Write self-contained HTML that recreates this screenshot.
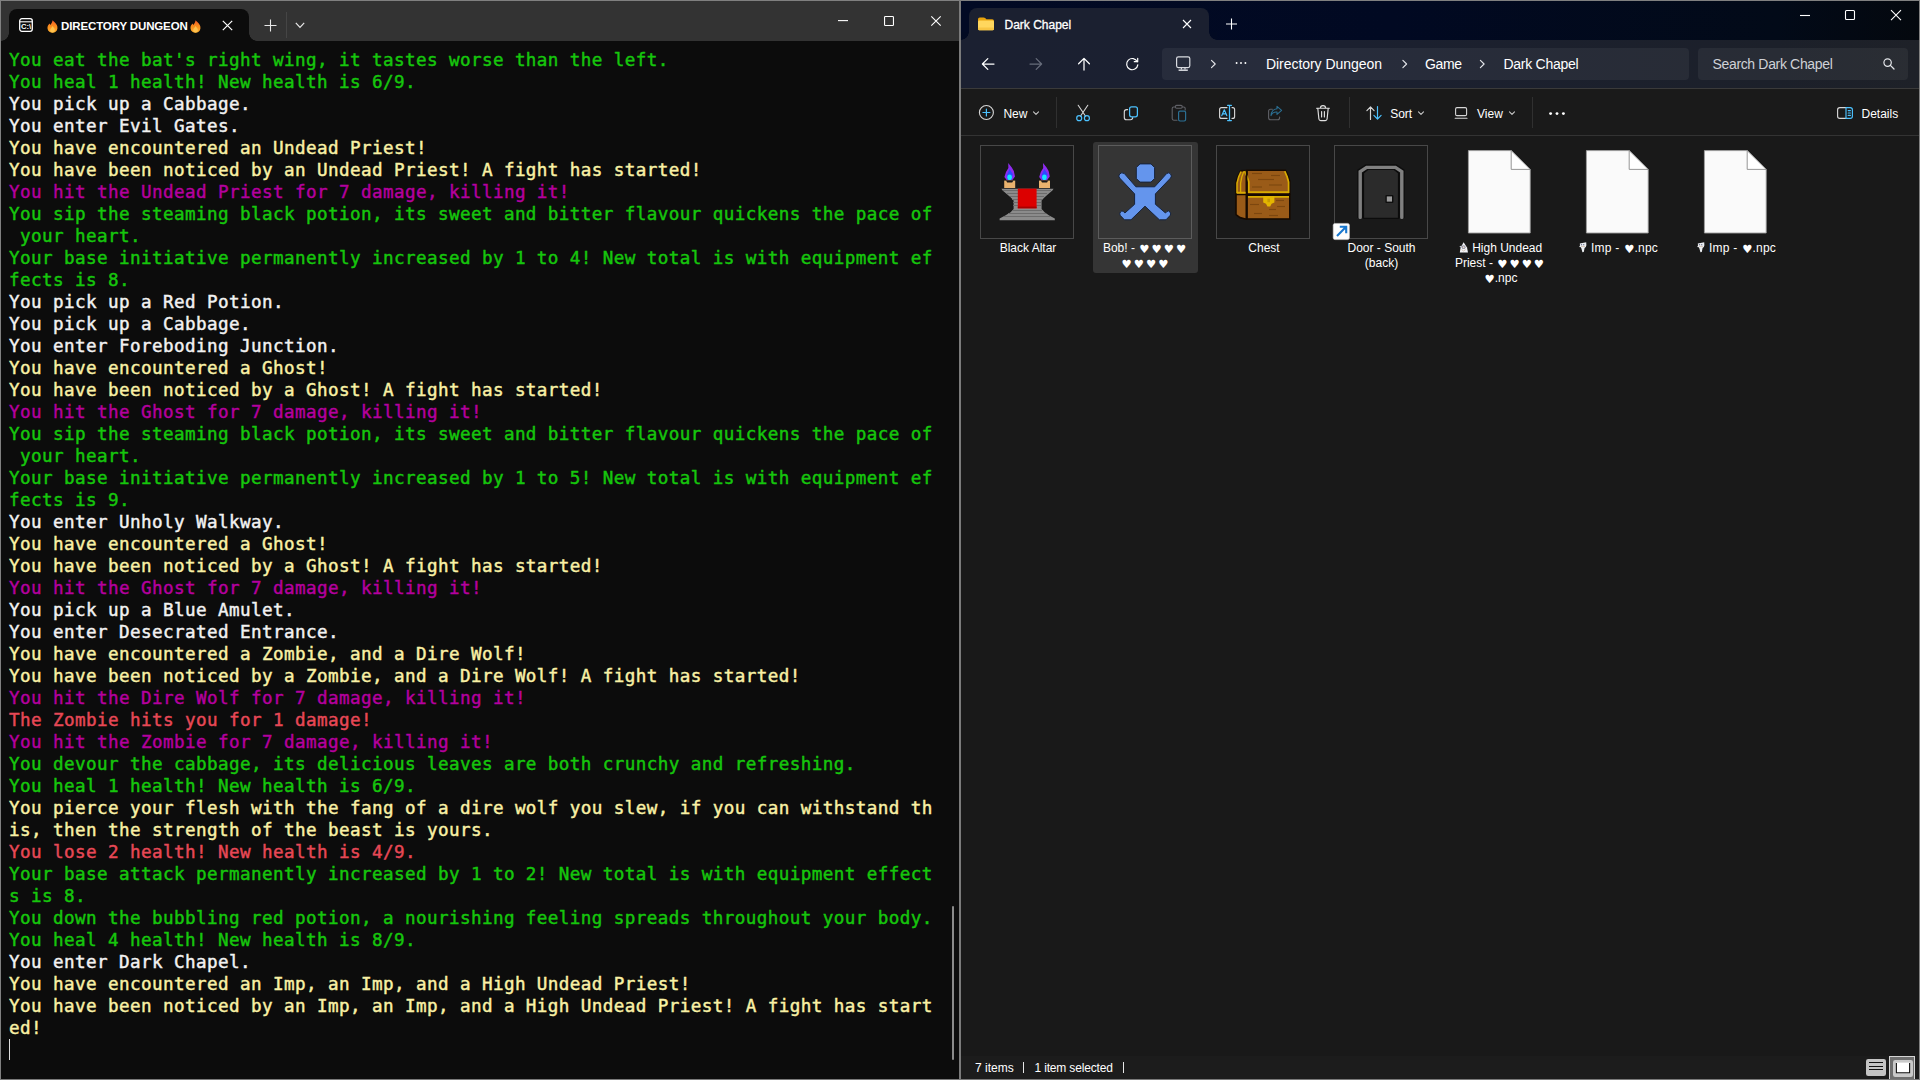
<!DOCTYPE html>
<html lang="en">
<head>
<meta charset="utf-8">
<title>Directory Dungeon</title>
<style>
*{box-sizing:border-box;margin:0;padding:0}
html,body{width:1920px;height:1080px;overflow:hidden;background:#0c0c0c}
body{position:relative;font-family:"Liberation Sans","DejaVu Sans",sans-serif;color:#fff}
.abs{position:absolute}
svg{position:absolute;overflow:visible}
/* ---------- terminal ---------- */
#term{position:absolute;left:0;top:0;width:959px;height:1080px;background:#0c0c0c}
#tbar{position:absolute;left:0;top:0;width:959px;height:41px;background:#333333}
#ttab{position:absolute;left:9px;top:9px;width:240px;height:32px;background:#0c0c0c;border-radius:8px 8px 0 0}
#ttab:before,#ttab:after{content:"";position:absolute;bottom:0;width:8px;height:8px;background:radial-gradient(circle at 0 0,#333333 7.5px,#0c0c0c 8px)}
#ttab:before{left:-8px}
#ttab:after{right:-8px;background:radial-gradient(circle at 100% 0,#333333 7.5px,#0c0c0c 8px)}
#ttitle{position:absolute;left:52px;top:9px;font:bold 11.5px/16px "Liberation Sans",sans-serif;letter-spacing:-0.13px;color:#fff;white-space:nowrap}
#tlines{position:absolute;left:9px;top:49px;font:normal 17.6px/22px "DejaVu Sans Mono","Liberation Mono",monospace;letter-spacing:0.405px;-webkit-text-stroke:0.45px currentColor}
#tlines div{height:22px;white-space:pre}
.g{color:#16c60c}.w{color:#f2f2f2}.y{color:#f9f1a5}.m{color:#b4009e}.r{color:#e74856}
/* ---------- explorer ---------- */
#exp{position:absolute;left:961px;top:0;width:959px;height:1080px;background:#191919}
#etitle{position:absolute;left:0;top:0;width:959px;height:40px;background:linear-gradient(90deg,#020a24 0%,#010922 45%,#020a18 85%,#04080e 100%)}
#etab{position:absolute;left:8px;top:8px;width:240px;height:32px;background:#1b2030;border-radius:8px 8px 0 0}
#etab:before,#etab:after{content:"";position:absolute;bottom:0;width:8px;height:8px;background:radial-gradient(circle at 0 0,#020a22 7.5px,#1b2030 8px)}
#etab:before{left:-8px}
#etab:after{right:-8px;background:radial-gradient(circle at 100% 0,#020a22 7.5px,#1b2030 8px)}
#enav{position:absolute;left:0;top:40px;width:959px;height:48px;background:linear-gradient(90deg,#1b2031 0%,#1b2030 40%,#1c202a 85%,#1e2128 100%)}
#ecmd{position:absolute;left:0;top:88px;width:959px;height:48px;background:#1a1a1a;box-shadow:inset 0 1px 0 #3a3a3a,inset 0 -1px 0 #333}
.box{position:absolute;top:9px;height:32px;background:rgba(255,255,255,0.055);border-radius:4px}
.t12{position:absolute;font-size:12px;line-height:15px;white-space:nowrap;color:#fff}
.t14{position:absolute;font-size:14px;line-height:20px;white-space:nowrap;color:#fff}
.lbl{position:absolute;width:118px;text-align:center;font-size:12px;line-height:15px;color:#fff;white-space:nowrap}
.h{font-family:"DejaVu Sans",sans-serif;font-size:11.4px;letter-spacing:2px;line-height:1px;position:relative;top:0.8px;margin-left:1px}
.h1{letter-spacing:0}
svg.ico{position:relative;vertical-align:-1px}
.frame{position:absolute;width:94px;height:94px;border:1px solid #484848}
.vsep{position:absolute;top:9px;width:1px;height:31px;background:#303030}
</style>
</head>
<body>
<!-- ================= TERMINAL ================= -->
<div id="term">
 <div id="tbar">
  <div id="ttab">
   <svg style="left:10px;top:9px" width="14" height="14" viewBox="0 0 14 14"><rect x="0.7" y="0.7" width="12.6" height="12.6" rx="2.2" fill="none" stroke="#fff" stroke-width="1.3"/><line x1="0.7" y1="3.8" x2="13.3" y2="3.8" stroke="#fff" stroke-width="1.1"/><text x="2" y="11" font-family="Liberation Sans,sans-serif" font-weight="bold" font-size="6.6" fill="#fff" textLength="10.2" lengthAdjust="spacingAndGlyphs">C:\</text></svg><svg style="left:37.6px;top:10.6px" width="11" height="13" viewBox="0 0 11 13"><defs><linearGradient id="fg1" x1="0" y1="0" x2="0" y2="1"><stop offset="0" stop-color="#f4582a"/><stop offset="0.45" stop-color="#f98a1d"/><stop offset="1" stop-color="#ffb02e"/></linearGradient></defs><path d="M5.6 0.2C6.6 1.6 8.6 2.8 9.8 5 11 7.4 10.6 10.2 8.6 11.8 6.9 13.1 4.2 13.1 2.4 11.8 0.4 10.3 0 7.6 1 5.6 1.4 4.8 2 4.2 2.6 3.4 2.9 4 3.1 4.5 3.3 5.1 4.3 3.8 5.2 2.2 5.6 0.2Z" fill="url(#fg1)"/><path d="M5.6 6C6.2 7.2 7.8 8.2 7.9 10 7.9 11.5 6.9 12.5 5.5 12.5 4.1 12.5 3.1 11.5 3.2 10 3.3 8.4 4.9 7.6 5.6 6Z" fill="#ffc24d"/></svg><svg style="left:180.6px;top:10.6px" width="11" height="13" viewBox="0 0 11 13"><defs><linearGradient id="fg2" x1="0" y1="0" x2="0" y2="1"><stop offset="0" stop-color="#f4582a"/><stop offset="0.45" stop-color="#f98a1d"/><stop offset="1" stop-color="#ffb02e"/></linearGradient></defs><path d="M5.6 0.2C6.6 1.6 8.6 2.8 9.8 5 11 7.4 10.6 10.2 8.6 11.8 6.9 13.1 4.2 13.1 2.4 11.8 0.4 10.3 0 7.6 1 5.6 1.4 4.8 2 4.2 2.6 3.4 2.9 4 3.1 4.5 3.3 5.1 4.3 3.8 5.2 2.2 5.6 0.2Z" fill="url(#fg2)"/><path d="M5.6 6C6.2 7.2 7.8 8.2 7.9 10 7.9 11.5 6.9 12.5 5.5 12.5 4.1 12.5 3.1 11.5 3.2 10 3.3 8.4 4.9 7.6 5.6 6Z" fill="#ffc24d"/></svg><svg style="left:213px;top:11px" width="11" height="11" viewBox="0 0 11 11"><path d="M0.8 0.8L10.2 10.2M10.2 0.8L0.8 10.2" stroke="#fff" stroke-width="1.2" fill="none"/></svg>
   <div id="ttitle">DIRECTORY DUNGEON</div>
  </div>
  <svg style="left:264px;top:19px" width="13" height="13" viewBox="0 0 13 13"><path d="M6.5 0.5V12.5M0.5 6.5H12.5" stroke="#e8e8e8" stroke-width="1.1" fill="none"/></svg>
<div class="abs" style="left:286px;top:12px;width:1px;height:26px;background:#454545"></div>
<svg style="left:295px;top:22px" width="10" height="7" viewBox="0 0 10 7"><path d="M0.8 0.9L5 5.3 9.2 0.9" stroke="#e8e8e8" stroke-width="1.2" fill="none"/></svg>
<svg style="left:838px;top:20px" width="10" height="2" viewBox="0 0 10 2"><path d="M0 0.6H10" stroke="#fff" stroke-width="1.1"/></svg>
<svg style="left:884px;top:16px" width="10" height="10" viewBox="0 0 10 10"><rect x="0.55" y="0.55" width="8.9" height="8.9" rx="0.8" fill="none" stroke="#fff" stroke-width="1.1"/></svg>
<svg style="left:931px;top:16px" width="10" height="10" viewBox="0 0 10 10"><path d="M0.3 0.3L9.7 9.7M9.7 0.3L0.3 9.7" stroke="#fff" stroke-width="1.1" fill="none"/></svg>
 </div>
 <div id="tlines">
<div class="g">You eat the bat's right wing, it tastes worse than the left.</div>
<div class="g">You heal 1 health! New health is 6/9.</div>
<div class="w">You pick up a Cabbage.</div>
<div class="w">You enter Evil Gates.</div>
<div class="y">You have encountered an Undead Priest!</div>
<div class="y">You have been noticed by an Undead Priest! A fight has started!</div>
<div class="m">You hit the Undead Priest for 7 damage, killing it!</div>
<div class="g">You sip the steaming black potion, its sweet and bitter flavour quickens the pace of</div>
<div class="g"> your heart.</div>
<div class="g">Your base initiative permanently increased by 1 to 4! New total is with equipment ef</div>
<div class="g">fects is 8.</div>
<div class="w">You pick up a Red Potion.</div>
<div class="w">You pick up a Cabbage.</div>
<div class="w">You enter Foreboding Junction.</div>
<div class="y">You have encountered a Ghost!</div>
<div class="y">You have been noticed by a Ghost! A fight has started!</div>
<div class="m">You hit the Ghost for 7 damage, killing it!</div>
<div class="g">You sip the steaming black potion, its sweet and bitter flavour quickens the pace of</div>
<div class="g"> your heart.</div>
<div class="g">Your base initiative permanently increased by 1 to 5! New total is with equipment ef</div>
<div class="g">fects is 9.</div>
<div class="w">You enter Unholy Walkway.</div>
<div class="y">You have encountered a Ghost!</div>
<div class="y">You have been noticed by a Ghost! A fight has started!</div>
<div class="m">You hit the Ghost for 7 damage, killing it!</div>
<div class="w">You pick up a Blue Amulet.</div>
<div class="w">You enter Desecrated Entrance.</div>
<div class="y">You have encountered a Zombie, and a Dire Wolf!</div>
<div class="y">You have been noticed by a Zombie, and a Dire Wolf! A fight has started!</div>
<div class="m">You hit the Dire Wolf for 7 damage, killing it!</div>
<div class="r">The Zombie hits you for 1 damage!</div>
<div class="m">You hit the Zombie for 7 damage, killing it!</div>
<div class="g">You devour the cabbage, its delicious leaves are both crunchy and refreshing.</div>
<div class="g">You heal 1 health! New health is 6/9.</div>
<div class="y">You pierce your flesh with the fang of a dire wolf you slew, if you can withstand th</div>
<div class="y">is, then the strength of the beast is yours.</div>
<div class="r">You lose 2 health! New health is 4/9.</div>
<div class="g">Your base attack permanently increased by 1 to 2! New total is with equipment effect</div>
<div class="g">s is 8.</div>
<div class="g">You down the bubbling red potion, a nourishing feeling spreads throughout your body.</div>
<div class="g">You heal 4 health! New health is 8/9.</div>
<div class="w">You enter Dark Chapel.</div>
<div class="y">You have encountered an Imp, an Imp, and a High Undead Priest!</div>
<div class="y">You have been noticed by an Imp, an Imp, and a High Undead Priest! A fight has start</div>
<div class="y">ed!</div>
 </div>
 <div class="abs" style="left:9px;top:1039px;width:1px;height:21px;background:#ddd"></div>
 <div class="abs" style="left:952px;top:906px;width:2px;height:154px;background:#8a8a8a;border-radius:1px"></div>
</div>
<!-- ================= EXPLORER ================= -->
<div id="exp">
 <div id="etitle">
  <div id="etab">
   
   <div class="t12" style="left:35.5px;top:10.2px;-webkit-text-stroke:0.3px #fff">Dark Chapel</div>
  </div>
  <svg style="left:0;top:0" width="959" height="40" viewBox="961 0 959 40">
<path d="M978 19.2Q978 17.4 979.8 17.4H983.6Q984.5 17.4 985.1 18L986.4 19.3H992.2Q994 19.3 994 21.1V22H978Z" fill="#e8a30c"/>
<rect x="978" y="20.6" width="16" height="9.6" rx="1.4" fill="#ffd75e"/>
<rect x="978" y="27.5" width="16" height="2.7" rx="1.2" fill="#f7c544"/>
<path d="M1183 20L1191 28M1191 20L1183 28" stroke="#fff" stroke-width="1.1" fill="none"/>
<path d="M1231.5 18.5V29.5M1226 24H1237" stroke="#fff" stroke-width="1.1" fill="none"/>
<path d="M1800 15.5H1810" stroke="#fff" stroke-width="1.1"/>
<rect x="1845.5" y="10.5" width="9" height="9" rx="1" fill="none" stroke="#fff" stroke-width="1.1"/>
<path d="M1891 10.2L1901 20.2M1901 10.2L1891 20.2" stroke="#fff" stroke-width="1.1" fill="none"/>
</svg>
 </div>
 <div id="enav">
  <div class="box" style="left:201px;top:8px;width:527px"></div>
<div class="box" style="left:737px;top:8px;width:210px"></div>
<svg style="left:0;top:0" width="959" height="48" viewBox="961 40 959 48" fill="none" stroke-linecap="round" stroke-linejoin="round">
<path d="M994 64H982.5M987.8 58.6L982.4 64 987.8 69.4" stroke="#fff" stroke-width="1.25"/>
<path d="M1030 64H1041.5M1036.2 58.6L1041.6 64 1036.2 69.4" stroke="#676c7a" stroke-width="1.25"/>
<path d="M1084 70V58.5M1078.6 63.8L1084 58.4 1089.4 63.8" stroke="#fff" stroke-width="1.25"/>
<path d="M1137.3 61.7A5.6 5.6 0 1 0 1137.8 64.9" stroke="#fff" stroke-width="1.2"/><path d="M1137.7 58.3V61.7H1134.3" stroke="#fff" stroke-width="1.2"/>
<rect x="1176.6" y="56.8" width="13.2" height="10.8" rx="1.8" stroke="#d9dbe0" stroke-width="1.2"/><path d="M1178.6 70.2H1187.8" stroke="#d9dbe0" stroke-width="1.5" stroke-linecap="butt"/><path d="M1181.4 68V69.6M1185 68V69.6" stroke="#d9dbe0" stroke-width="1.2" stroke-linecap="butt"/>
<path d="M1211.5 60.4L1215.2 64 1211.5 67.6" stroke="#e4e6ea" stroke-width="1.15"/>
<path d="M1402.9 60.4L1406.6 64 1402.9 67.6" stroke="#e4e6ea" stroke-width="1.15"/>
<path d="M1480.4 60.4L1484.1 64 1480.4 67.6" stroke="#e4e6ea" stroke-width="1.15"/>
<circle cx="1236.6" cy="63" r="0.95" fill="#fff" stroke="none"/>
<circle cx="1241" cy="63" r="0.95" fill="#fff" stroke="none"/>
<circle cx="1245.4" cy="63" r="0.95" fill="#fff" stroke="none"/>
<circle cx="1887.6" cy="62.6" r="3.7" stroke="#e4e6ea" stroke-width="1.2"/><path d="M1890.4 65.4L1894 69" stroke="#e4e6ea" stroke-width="1.3"/>
</svg>
<div class="t14" style="left:305px;top:14px;letter-spacing:-0.05px">Directory Dungeon</div>
<div class="t14" style="left:464px;top:14px;letter-spacing:-0.4px">Game</div>
<div class="t14" style="left:542.5px;top:14px;letter-spacing:-0.28px">Dark Chapel</div>
<div class="t14" style="left:751.5px;top:14px;color:#cfd1d6;letter-spacing:-0.34px">Search Dark Chapel</div>
 </div>
 <div id="ecmd">
  <div class="vsep" style="left:95px"></div>
<div class="vsep" style="left:388px"></div>
<div class="vsep" style="left:571px"></div>
<svg style="left:0;top:0" width="959" height="48" viewBox="961 88 959 48" fill="none" stroke-linecap="round" stroke-linejoin="round">
<circle cx="986.4" cy="112.5" r="7" stroke="#d6d6d6" stroke-width="1.1"/><path d="M986.4 109V116M982.9 112.5H989.9" stroke="#4cc2ff" stroke-width="1.2"/>
<path d="M1033.5 111.8L1036 114.3 1038.5 111.8" stroke="#c8c8c8" stroke-width="1.1"/>
<path d="M1418.5 111.8L1421 114.3 1423.5 111.8" stroke="#c8c8c8" stroke-width="1.1"/>
<path d="M1509.5 111.8L1512 114.3 1514.5 111.8" stroke="#c8c8c8" stroke-width="1.1"/>
<path d="M1078.2 105.3L1085.6 116.2M1087.8 105.3L1080.4 116.2" stroke="#d6d6d6" stroke-width="1.1"/>
<circle cx="1079.2" cy="118.2" r="2.5" stroke="#4cc2ff" stroke-width="1.2"/><circle cx="1086.9" cy="118.2" r="2.5" stroke="#4cc2ff" stroke-width="1.2"/>
<path d="M1127.6 109.6H1126.6Q1124.3 109.6 1124.3 111.9V117.4Q1124.3 119.7 1126.6 119.7H1130.4Q1132.7 119.7 1132.7 117.6" stroke="#d6d6d6" stroke-width="1.15"/>
<rect x="1129.6" y="106.8" width="7.8" height="10" rx="2" stroke="#4cc2ff" stroke-width="1.25"/>
<path d="M1175 107H1173.8Q1172.2 107 1172.2 108.6V118.6Q1172.2 120.2 1173.8 120.2H1177M1182.6 107H1183.6Q1185.2 107 1185.2 108.6V110" stroke="#5f6066" stroke-width="1.1"/><rect x="1175.4" y="105.4" width="6.8" height="2.8" rx="1.2" stroke="#5f6066" stroke-width="1.1"/>
<rect x="1178.6" y="111.2" width="7" height="9.8" rx="1.4" stroke="#2b6f93" stroke-width="1.2"/>
<path d="M1227 107.6H1221.6Q1219.6 107.6 1219.6 109.6V116.4Q1219.6 118.4 1221.6 118.4H1227M1232 107.6H1232.8Q1234.6 107.6 1234.6 109.6V116.4Q1234.6 118.4 1232.8 118.4H1232" stroke="#d6d6d6" stroke-width="1.15"/>
<path d="M1229.5 105.4V120.6M1227.6 105.4H1231.4M1227.6 120.6H1231.4" stroke="#4cc2ff" stroke-width="1.25"/>
<path d="M1221.8 115.6L1224.3 109.8 1226.8 115.6M1222.7 113.8H1225.9" stroke="#4cc2ff" stroke-width="1.15"/>
<path d="M1272.4 109.2H1270.6Q1268.6 109.2 1268.6 111.2V117.8Q1268.6 119.8 1270.6 119.8H1277.6Q1279.6 119.8 1279.6 117.8V117" stroke="#5f6066" stroke-width="1.1"/>
<path d="M1277 106.4L1281.6 110.4 1277 114.4V112Q1272.8 111.6 1271 115.6 1271.4 109.4 1277 108.8Z" stroke="#2b6f93" stroke-width="1.1"/>
<path d="M1316.6 108.2H1329.4M1320.4 108Q1320.4 105.6 1323 105.6 1325.6 105.6 1325.6 108M1317.8 108.4L1318.9 119Q1319.1 120.6 1320.7 120.6H1325.3Q1326.9 120.6 1327.1 119L1328.2 108.4M1321.6 111.6V117M1324.4 111.6V117" stroke="#e0e0e0" stroke-width="1.15"/>
<path d="M1370.5 119.4V107M1366.9 110.6L1370.5 106.9 1374.1 110.6" stroke="#d6d6d6" stroke-width="1.15"/>
<path d="M1377.5 106.6V119M1373.9 115.4L1377.5 119.1 1381.1 115.4" stroke="#4cc2ff" stroke-width="1.2"/>
<rect x="1455.6" y="107.6" width="11" height="8" rx="1.4" stroke="#d6d6d6" stroke-width="1.1"/><path d="M1455.2 118.2H1467" stroke="#d6d6d6" stroke-width="1.1"/>
<circle cx="1550.6" cy="113.6" r="1.45" fill="#fff" stroke="none"/>
<circle cx="1557" cy="113.6" r="1.45" fill="#fff" stroke="none"/>
<circle cx="1563.4" cy="113.6" r="1.45" fill="#fff" stroke="none"/>
<path d="M1846 107.6H1839.8Q1837.6 107.6 1837.6 109.8V116.2Q1837.6 118.4 1839.8 118.4H1846" stroke="#d6d6d6" stroke-width="1.15"/>
<path d="M1846 107.6H1850.2Q1852.4 107.6 1852.4 109.8V116.2Q1852.4 118.4 1850.2 118.4H1846ZM1848.2 110.6H1850.4M1848.2 113H1850.4M1848.2 115.4H1850.4" stroke="#4cc2ff" stroke-width="1.15"/>
</svg>
<div class="t12" style="left:42.4px;top:19.3px;">New</div>
<div class="t12" style="left:429.2px;top:19.3px;">Sort</div>
<div class="t12" style="left:516px;top:19.3px;">View</div>
<div class="t12" style="left:900.5px;top:19.3px;">Details</div>
 </div>
 <div id="eitems">
  <div class="abs" style="left:132px;top:142px;width:105px;height:131px;background:#353535;border-radius:3px"></div>
<div class="frame" style="left:19px;top:145px"></div>
<div class="frame" style="left:137px;top:145px;border-color:#5c5c5c"></div>
<div class="frame" style="left:255px;top:145px"></div>
<div class="frame" style="left:373px;top:145px"></div>
<svg style="left:0;top:136px" width="959" height="160" viewBox="961 136 959 160">
<path d="M1008.2 163L1011.8 167.5 1013.8 171 1015 176.5 1012.2 180.2H1006.8L1004.4 177 1006 172 1008.4 168Z" fill="#8f2bf0"/>
<path d="M1009.6 169L1012.8 174 1011.8 179.6H1007L1006.8 175Z" fill="#2f49ff"/>
<ellipse cx="1009.6" cy="177.2" rx="2.3" ry="2.8" fill="#16e4ff"/>
<path d="M1004.2 180.6H1015.2V188H1004.2Z" fill="#e9b26e"/>
<path d="M1006 180.4H1013.4L1012.2 182.4H1007.2Z" fill="#191919"/>
<path d="M1043 163L1046.6 167.5 1048.6 171 1049.8 176.5 1047 180.2H1041.6L1039.2 177 1040.8 172 1043.2 168Z" fill="#8f2bf0"/>
<path d="M1044.4 169L1047.6 174 1046.6 179.6H1041.8L1041.6 175Z" fill="#2f49ff"/>
<ellipse cx="1044.4" cy="177.2" rx="2.3" ry="2.8" fill="#16e4ff"/>
<path d="M1039 180.6H1050V188H1039Z" fill="#e9b26e"/>
<path d="M1040.8 180.4H1048.2L1047 182.4H1042Z" fill="#191919"/>
<path d="M1001.4 188.7H1053.6L1052.4 190.6 1048 194.2 1044.4 197.4 1041.6 200.4V209L1044.6 212.2 1049.2 215.6 1054.8 218.4V220.2H999.6V218.4L1005.2 215.6 1010.6 212.2 1013.6 209V200.4L1010.8 197.4 1007 194.2 1002.6 190.6Z" fill="#8b8b8b"/>
<path d="M1003 190.5H1051" stroke="#6c6c6c" stroke-width="1"/>
<path d="M1007 193.5H1047" stroke="#6c6c6c" stroke-width="1"/>
<path d="M1010 196.5H1044" stroke="#6c6c6c" stroke-width="1"/>
<path d="M1012 199.5H1042" stroke="#6c6c6c" stroke-width="1"/>
<path d="M1013 202.5H1041" stroke="#6c6c6c" stroke-width="1"/>
<path d="M1013 205.5H1041" stroke="#6c6c6c" stroke-width="1"/>
<path d="M1012 210.5H1042" stroke="#6c6c6c" stroke-width="1"/>
<path d="M1008 213.5H1046" stroke="#6c6c6c" stroke-width="1"/>
<path d="M1004 216.5H1050" stroke="#6c6c6c" stroke-width="1"/>
<rect x="1017.8" y="188.6" width="18.8" height="19.8" fill="#dc0000"/>
<path d="M1017.8 207.4H1036.6" stroke="#a80000" stroke-width="1.6"/>
<path d="M1140 163.9H1151L1154.6 167.5V178.5L1151 182.1H1140L1136.3 178.5V167.5Z" fill="#6495ed" stroke="#16233d" stroke-width="1" stroke-linejoin="round"/>
<path d="M1124.4 173.6L1135.9 186.8H1154.7L1166.6 173.6Q1169 171.8 1170.6 174Q1172.2 176.2 1170.6 178L1155.4 193.9V204.3L1165.5 213L1166.8 211.6Q1168.6 210 1170 212Q1171.4 214 1170 215.6L1166 219.8H1159.4L1145 206.2L1131 219.8H1124.4L1120.4 215.6Q1119 214 1120.4 212Q1121.8 210 1123.6 211.6L1124.9 213L1134.6 204.3V193.9L1119.6 178Q1118 176.2 1119.6 174Q1121.6 171.8 1124.4 173.6Z" fill="#6495ed" stroke="#16233d" stroke-width="1" stroke-linejoin="round"/>
<path d="M1246.4 170.6L1240.6 170.8 1238 176 1236 182V214.6L1240 217.6 1246.4 219.2Z" fill="#9a5b18" stroke="#160a00" stroke-width="1.6" stroke-linejoin="round"/>
<path d="M1241 171.6L1238.6 177 1237 183V192.4H1245.6" fill="none" stroke="#d9ac00" stroke-width="1.5"/>
<path d="M1243.8 171.4L1241.8 177 1240.6 183V192" fill="none" stroke="#d9ac00" stroke-width="1.3"/>
<path d="M1247 170.2H1285.4L1288 175.6 1289.8 181V194.4H1247Z" fill="#9a5b18" stroke="#160a00" stroke-width="1.6" stroke-linejoin="round"/>
<path d="M1244.6 171.2L1247.2 177 1248.8 182V192.2H1288.6V182L1287.2 177 1284.8 171.2" fill="none" stroke="#d9ac00" stroke-width="1.7"/>
<rect x="1247" y="195.2" width="42.8" height="23.8" fill="#9a5b18" stroke="#160a00" stroke-width="1.6"/>
<path d="M1248 196.8H1289" stroke="#d9ac00" stroke-width="1.8"/>
<path d="M1236 194.4H1290" stroke="#160a00" stroke-width="1.5"/>
<path d="M1236.8 193H1245.8" stroke="#d9ac00" stroke-width="1.2"/>
<path d="M1246.6 170.6V219" stroke="#160a00" stroke-width="1.5"/>
<path d="M1263.2 196H1274.4V202.4L1271.6 203.8 1270.2 206.6H1267.4L1266 203.8 1263.2 202.4Z" fill="#e3b500"/>
<rect x="1267.4" y="198.6" width="2.6" height="3.6" fill="#c79a00"/>
<path d="M1252 173.5H1262" stroke="#7d470f" stroke-width="1.1"/>
<path d="M1271 175.5H1280" stroke="#7d470f" stroke-width="1.1"/>
<path d="M1258 179.5H1274" stroke="#7d470f" stroke-width="1.1"/>
<path d="M1269 185H1282" stroke="#7d470f" stroke-width="1.1"/>
<path d="M1252 187H1262" stroke="#7d470f" stroke-width="1.1"/>
<path d="M1250 204.5H1259" stroke="#7d470f" stroke-width="1.1"/>
<path d="M1276 200.5H1284" stroke="#7d470f" stroke-width="1.1"/>
<path d="M1277 206.5H1285" stroke="#7d470f" stroke-width="1.1"/>
<path d="M1269 209.5H1276" stroke="#7d470f" stroke-width="1.1"/>
<path d="M1254 213.5H1262" stroke="#7d470f" stroke-width="1.1"/>
<path d="M1269 215.5H1278" stroke="#7d470f" stroke-width="1.1"/>
<path d="M1363.4 218.4V173L1368.6 168.6H1393.4L1398.6 173V218.4Z" fill="#2b2b2b" stroke="#0c0c0c" stroke-width="1.4"/>
<path d="M1360.2 218V171.4L1366.6 167.2H1395.4L1401.8 171.4V218" fill="none" stroke="#0d0d0d" stroke-width="5.8" stroke-linejoin="miter"/>
<path d="M1360.2 217.4V171.6L1366.6 167.4H1395.4L1401.8 171.6V217.4" fill="none" stroke="#808080" stroke-width="3.4" stroke-linejoin="miter" stroke-linecap="round"/>
<rect x="1385.4" y="195" width="8" height="8" rx="1" fill="#0e0e0e"/><rect x="1386.8" y="196.4" width="5.2" height="5.2" fill="#9a9a9a"/>
<rect x="1333.2" y="223.4" width="16.2" height="16.2" rx="1.8" fill="#fdfdfd" stroke="#d0d0d0" stroke-width="0.6"/>
<path d="M1337 236L1345.4 227.6M1339.8 226.8H1346.2V233.2" fill="none" stroke="#1978cf" stroke-width="2.1"/>
<path d="M1468.4 150.6H1511.2L1530.2 169.4V233H1468.4Z" fill="#fafafa" stroke="#9d9d9d" stroke-width="0.9" stroke-linejoin="round"/>
<path d="M1511.2 150.6V169.4H1530.2Z" fill="#ffffff" stroke="#8a8a8a" stroke-width="0.9" stroke-linejoin="round"/>
<path d="M1586.4 150.6H1629.2L1648.2 169.4V233H1586.4Z" fill="#fafafa" stroke="#9d9d9d" stroke-width="0.9" stroke-linejoin="round"/>
<path d="M1629.2 150.6V169.4H1648.2Z" fill="#ffffff" stroke="#8a8a8a" stroke-width="0.9" stroke-linejoin="round"/>
<path d="M1704.4 150.6H1747.2L1766.2 169.4V233H1704.4Z" fill="#fafafa" stroke="#9d9d9d" stroke-width="0.9" stroke-linejoin="round"/>
<path d="M1747.2 150.6V169.4H1766.2Z" fill="#ffffff" stroke="#8a8a8a" stroke-width="0.9" stroke-linejoin="round"/>
</svg>
<div class="lbl" style="left:8px;top:241px">Black Altar</div>
<div class="lbl" style="left:125.5px;top:241px">Bob! - <span class="h">♥♥♥♥</span><br><span class="h">♥♥♥♥</span></div>
<div class="lbl" style="left:244px;top:241px">Chest</div>
<div class="lbl" style="left:361.5px;top:241px">Door - South<br>(back)</div>
<div class="lbl" style="left:480.5px;top:241px"><svg class="ico" width="10" height="11" viewBox="0 0 10 11"><path d="M4.6 0.3L8 5.6 9 10.4H0.8L1.6 5.8Z" fill="#f3f3f6"/><path d="M0.4 4.8L2.4 3.6 1.8 5.6Z" fill="#dfe9f5"/><circle cx="4.6" cy="5.2" r="1.9" fill="#8d8fa3"/><circle cx="4.6" cy="5.2" r="1" fill="#e9d9c9"/><path d="M2.6 7.6L4.6 9 6.6 7.6" stroke="#c9b7a6" stroke-width="0.8" fill="none"/></svg> High Undead<br>Priest - <span class="h">♥♥♥♥</span><br><span class="h h1">♥</span>.npc</div>
<div class="lbl" style="left:598.3px;top:241px;letter-spacing:0.25px"><svg class="ico" style="margin-right:4.5px" width="8" height="11" viewBox="0 0 8 11"><path d="M0.8 1.4L6 0.6 7.2 0.2 7.4 3.2 6.8 5 5.6 6 4.8 10 3.4 10.2 2.4 6.4 1.8 5.2 0.2 5 1 3.6Z" fill="#eceff2"/><rect x="1.9" y="2.3" width="1.2" height="0.9" fill="#4a4f70"/><rect x="4.1" y="2.3" width="1.2" height="0.9" fill="#4a4f70"/><path d="M2 4.4H6" stroke="#c9b29a" stroke-width="0.7"/></svg>Imp - <span class="h h1">♥</span>.npc</div>
<div class="lbl" style="left:716.3px;top:241px;letter-spacing:0.25px"><svg class="ico" style="margin-right:4.5px" width="8" height="11" viewBox="0 0 8 11"><path d="M0.8 1.4L6 0.6 7.2 0.2 7.4 3.2 6.8 5 5.6 6 4.8 10 3.4 10.2 2.4 6.4 1.8 5.2 0.2 5 1 3.6Z" fill="#eceff2"/><rect x="1.9" y="2.3" width="1.2" height="0.9" fill="#4a4f70"/><rect x="4.1" y="2.3" width="1.2" height="0.9" fill="#4a4f70"/><path d="M2 4.4H6" stroke="#c9b29a" stroke-width="0.7"/></svg>Imp - <span class="h h1">♥</span>.npc</div>
 </div>
 <div class="abs" style="left:0;top:1056px;width:959px;height:24px;background:#1c1c1c"></div>
<div class="t12" style="left:14px;top:1061.3px">7 items</div>
<div class="abs" style="left:62px;top:1062px;width:1px;height:11px;background:#e6e6e6"></div>
<div class="t12" style="left:73.5px;top:1061.3px;letter-spacing:-0.17px">1 item selected</div>
<div class="abs" style="left:162px;top:1062px;width:1px;height:11px;background:#e6e6e6"></div>
<svg style="left:901px;top:1054px" width="54" height="26" viewBox="1862 1054 54 26">
<rect x="1866" y="1059" width="20" height="17" rx="2.2" fill="#c4c4c4"/>
<path d="M1869 1062.5H1883" stroke="#111" stroke-width="1"/>
<path d="M1869 1066.5H1883" stroke="#111" stroke-width="1"/>
<path d="M1869 1069.5H1883" stroke="#111" stroke-width="1"/>
<rect x="1889.5" y="1056.5" width="25" height="24" fill="#6e6e6e" stroke="#d4d4d4" stroke-width="1"/>
<rect x="1893" y="1060" width="20" height="17" rx="2.2" fill="#c9c9c9"/>
<rect x="1896.2" y="1062.6" width="13.6" height="10.2" fill="#ffffff"/><path d="M1896.4 1063V1072.8H1909.6V1063" fill="none" stroke="#111" stroke-width="1.1"/>
</svg>
</div>
<!-- window borders -->
<div class="abs" style="left:0;top:0;width:1920px;height:1px;background:#808080"></div>
<div class="abs" style="left:0;top:0;width:1px;height:1080px;background:#808080"></div>
<div class="abs" style="left:959px;top:0;width:2px;height:1080px;background:#7b7b7b"></div>
<div class="abs" style="left:1919px;top:0;width:1px;height:1080px;background:#808080"></div>
<div class="abs" style="left:0;top:1079px;width:1920px;height:1px;background:#7a7a7a"></div>
</body>
</html>
